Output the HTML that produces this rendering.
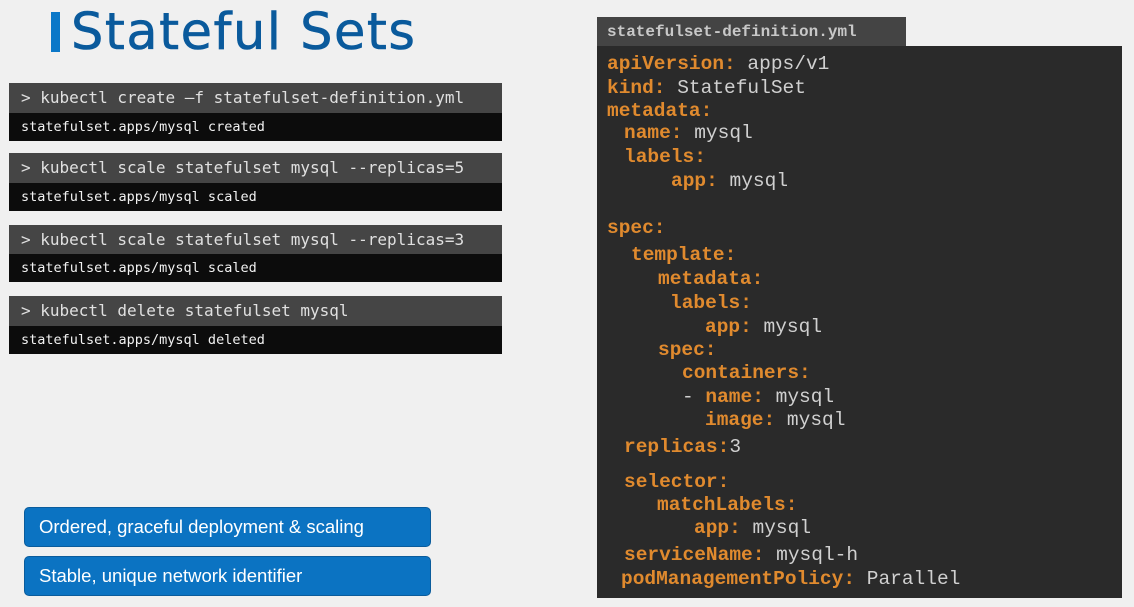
<!DOCTYPE html>
<html><head><meta charset="utf-8"><style>
body{margin:0;width:1134px;height:607px;background:#f0f0f0;position:relative;overflow:hidden;font-family:"Liberation Sans",sans-serif}
.bar{position:absolute;left:51px;top:12px;width:9px;height:40px;background:#0b78c8}
.title{position:absolute;left:71px;top:2px;font-family:"DejaVu Sans",sans-serif;font-size:51px;color:#0a5a9c;line-height:62px;letter-spacing:1.5px;-webkit-text-stroke:0.6px #0a5a9c}
.th{position:absolute;left:9px;width:493px;height:30px;background:#454545;color:#e0e0e0;font-family:"DejaVu Sans Mono","Liberation Mono",monospace;font-size:16px;line-height:30px;padding-left:12px;box-sizing:border-box}
.to{position:absolute;left:9px;width:493px;height:28px;background:#0c0c0c;color:#f2f2f2;font-family:"DejaVu Sans Mono","Liberation Mono",monospace;font-size:13.5px;line-height:28px;padding-left:12px;box-sizing:border-box}
.tab{position:absolute;left:597px;top:17px;width:309px;height:29px;background:#444;color:#c8c8c8;font-family:"Liberation Mono",monospace;font-weight:bold;font-size:16px;line-height:31px;padding-left:10px;box-sizing:border-box}
.panel{position:absolute;left:597px;top:46px;width:525px;height:552px;background:#2a2a2a}
.l{position:absolute;font-family:"Liberation Mono",monospace;font-size:19.5px;line-height:22px;white-space:pre;color:#d0d0d0}
.l b{color:#e08a2e}
.btn{position:absolute;left:24px;width:407px;height:40px;background:#0b73c2;border:1px solid #0a5c9c;border-radius:5px;box-sizing:border-box;color:#fff;font-size:18.5px;line-height:38px;padding-left:14px}
</style></head><body>
<div class="bar"></div><div class="title">Stateful Sets</div>
<div class="th" style="top:83px">&gt; kubectl create –f statefulset-definition.yml</div>
<div class="to" style="top:113px">statefulset.apps/mysql created</div>
<div class="th" style="top:153px">&gt; kubectl scale statefulset mysql --replicas=5</div>
<div class="to" style="top:183px">statefulset.apps/mysql scaled</div>
<div class="th" style="top:225px">&gt; kubectl scale statefulset mysql --replicas=3</div>
<div class="to" style="top:254px">statefulset.apps/mysql scaled</div>
<div class="th" style="top:296px">&gt; kubectl delete statefulset mysql</div>
<div class="to" style="top:326px">statefulset.apps/mysql deleted</div>
<div class="tab">statefulset-definition.yml</div>
<div class="panel"></div>
<div class="l" style="left:607px;top:53px"><b>apiVersion:</b> apps/v1</div>
<div class="l" style="left:607px;top:77px"><b>kind:</b> StatefulSet</div>
<div class="l" style="left:607px;top:100px"><b>metadata:</b></div>
<div class="l" style="left:624px;top:122px"><b>name:</b> mysql</div>
<div class="l" style="left:624px;top:146px"><b>labels:</b></div>
<div class="l" style="left:671px;top:170px"><b>app:</b> mysql</div>
<div class="l" style="left:607px;top:217px"><b>spec:</b></div>
<div class="l" style="left:631px;top:244px"><b>template:</b></div>
<div class="l" style="left:658px;top:268px"><b>metadata:</b></div>
<div class="l" style="left:670px;top:292px"><b>labels:</b></div>
<div class="l" style="left:705px;top:316px"><b>app:</b> mysql</div>
<div class="l" style="left:658px;top:339px"><b>spec:</b></div>
<div class="l" style="left:682px;top:362px"><b>containers:</b></div>
<div class="l" style="left:682px;top:386px">- <b>name:</b> mysql</div>
<div class="l" style="left:705px;top:409px"><b>image:</b> mysql</div>
<div class="l" style="left:624px;top:436px"><b>replicas:</b>3</div>
<div class="l" style="left:624px;top:471px"><b>selector:</b></div>
<div class="l" style="left:657px;top:494px"><b>matchLabels:</b></div>
<div class="l" style="left:694px;top:517px"><b>app:</b> mysql</div>
<div class="l" style="left:624px;top:544px"><b>serviceName:</b> mysql-h</div>
<div class="l" style="left:621px;top:568px"><b>podManagementPolicy:</b> Parallel</div>
<div class="btn" style="top:507px">Ordered, graceful deployment &amp; scaling</div>
<div class="btn" style="top:556px">Stable, unique network identifier</div>
</body></html>
